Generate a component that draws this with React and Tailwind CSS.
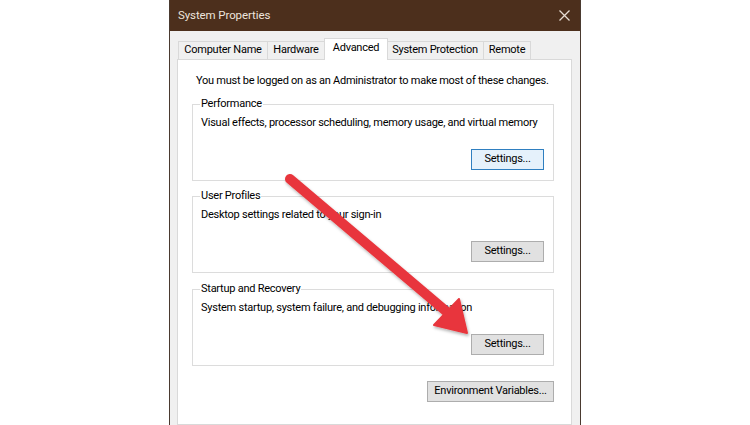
import React from "react";

function Btn({ children, focused, className = "" }) {
  return (
    <div
      className={
        "h-[21px] flex items-center justify-center border whitespace-nowrap text-black " +
        (focused
          ? "border-[#2f7fc0] bg-[#e5f1fb] "
          : "border-[#adadad] bg-[#e1e1e1] ") +
        className
      }
    >
      {children}
    </div>
  );
}

function Group({ label, text, focused, className = "" }) {
  return (
    <div className={"relative ml-[14px] mr-[17px] border border-[#dcdcdc] " + className}>
      <div className="absolute left-[7px] top-[-9px] bg-white px-[1px] leading-[16px] whitespace-nowrap">
        {label}
      </div>
      <div className="pl-[8px] pr-[9px] pt-[10px] pb-[10px]">
        <div className="leading-[16px] whitespace-nowrap">{text}</div>
        <div className="mt-[18px] flex justify-end">
          <Btn focused={focused} className="w-[73px]">Settings...</Btn>
        </div>
      </div>
    </div>
  );
}

function Tab({ children, w, selected }) {
  return (
    <div
      className={
        "flex items-center justify-center whitespace-nowrap border-t border-l border-r border-[#d9d9d9] " +
        (selected
          ? "h-[22px] bg-white relative z-10 -mx-[1px] mb-[-1px] pb-[2px]"
          : "h-[18px] bg-[#f0f0f0] -ml-[1px] first:ml-0")
      }
      style={{ width: w }}
    >
      {children}
    </div>
  );
}

function Arrow() {
  return (
    <svg
      className="absolute left-0 top-0 pointer-events-none"
      width="750"
      height="425"
      viewBox="0 0 750 425"
    >
      <defs>
        <filter id="sh" x="-20%" y="-20%" width="140%" height="140%">
          <feDropShadow dx="1" dy="2" stdDeviation="1.5" floodColor="#000" floodOpacity="0.3" />
        </filter>
      </defs>
      <g filter="url(#sh)">
        <line x1="290" y1="179" x2="447" y2="312" stroke="#e8363c" strokeWidth="10" strokeLinecap="round" />
        <polygon points="467,333 459,299 434,325" fill="#e8363c" stroke="#e8363c" strokeWidth="2" strokeLinejoin="round" />
      </g>
    </svg>
  );
}

export default function App() {
  return (
    <div className="relative w-[750px] h-[425px] overflow-hidden bg-white font-[Roboto,'Noto_Sans',sans-serif] text-[11px] tracking-[-0.25px] text-black">
      <div className="ml-[169px] w-[412px] h-[425px] flex flex-col border-x border-[#4a3a30] bg-[#f0f0f0]">
        <div className="h-[31px] shrink-0 bg-[#4c2f1c] flex items-center justify-between pl-[8px] pr-[10px]">
          <span className="text-[11.5px] tracking-[-0.1px] text-[#ece4dc]">System Properties</span>
          <svg width="11" height="11" viewBox="0 0 11 11">
            <path d="M0.5 0.5 L10.5 10.5 M10.5 0.5 L0.5 10.5" stroke="#e6dcd2" strokeWidth="1.3" />
          </svg>
        </div>
        <div className="pl-[7px] pr-[8px] pt-[6px] flex-1 flex flex-col">
          <div className="flex items-end h-[22px] pl-[1px]">
            <Tab w={90}>Computer Name</Tab>
            <Tab w={58}>Hardware</Tab>
            <Tab w={64} selected>Advanced</Tab>
            <Tab w={98}>System Protection</Tab>
            <Tab w={48}>Remote</Tab>
          </div>
          <div className="flex-1 border border-[#d9d9d9] bg-white">
            <div className="pl-[18px] pt-[13px] leading-[16px] whitespace-nowrap">
              You must be logged on as an Administrator to make most of these changes.
            </div>
            <Group
              className="mt-[15px]"
              label="Performance"
              text="Visual effects, processor scheduling, memory usage, and virtual memory"
              focused
            />
            <Group
              className="mt-[15px]"
              label="User Profiles"
              text="Desktop settings related to your sign-in"
            />
            <Group
              className="mt-[16px]"
              label="Startup and Recovery"
              text="System startup, system failure, and debugging information"
            />
            <div className="mt-[15px] mr-[17px] flex justify-end">
              <Btn className="w-[127px]">Environment Variables...</Btn>
            </div>
          </div>
        </div>
      </div>
      <Arrow />
    </div>
  );
}
